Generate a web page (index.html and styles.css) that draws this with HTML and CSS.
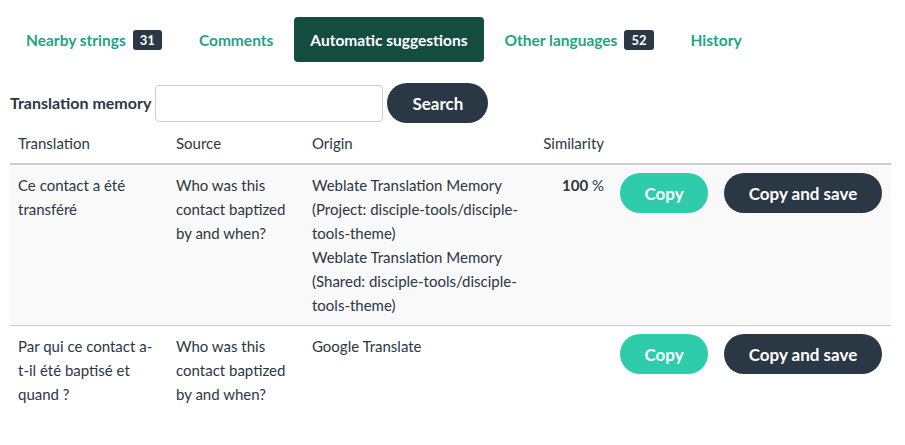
FILE: index.html
```html
<!DOCTYPE html>
<html lang="en">
<head>
  <meta charset="UTF-8">
  <title>Automatic suggestions</title>
  <link rel="stylesheet" href="styles.css">
</head>
<body>
  <ul class="tabs">
    <li><a href="#">Nearby strings <span class="badge">31</span></a></li>
    <li><a href="#">Comments</a></li>
    <li class="active"><a href="#">Automatic suggestions</a></li>
    <li><a href="#">Other languages <span class="badge">52</span></a></li>
    <li><a href="#">History</a></li>
  </ul>

  <form class="memory-form">
    <label for="memoryQuery">Translation memory</label>
    <input type="text" id="memoryQuery">
    <button type="button" class="btn btn-dark btn-search">Search</button>
  </form>

  <table class="suggestions">
    <colgroup>
      <col class="col-translation">
      <col class="col-source">
      <col class="col-origin">
      <col class="col-similarity">
      <col>
    </colgroup>
    <thead>
      <tr>
        <th>Translation</th>
        <th>Source</th>
        <th>Origin</th>
        <th class="num">Similarity</th>
        <th></th>
      </tr>
    </thead>
    <tbody>
      <tr class="striped">
        <td>Ce contact a été transféré</td>
        <td>Who was this contact baptized by and when?</td>
        <td>Weblate Translation Memory (Project: disciple-tools/disciple-tools-theme)<br>Weblate Translation Memory (Shared: disciple-tools/disciple-tools-theme)</td>
        <td class="num"><strong>100</strong> %</td>
        <td class="actions">
          <button type="button" class="btn btn-primary">Copy</button>
          <button type="button" class="btn btn-dark">Copy and save</button>
        </td>
      </tr>
      <tr>
        <td>Par qui ce contact a-t-il été baptisé et quand ?</td>
        <td>Who was this contact baptized by and when?</td>
        <td>Google Translate</td>
        <td class="num"></td>
        <td class="actions">
          <button type="button" class="btn btn-primary">Copy</button>
          <button type="button" class="btn btn-dark">Copy and save</button>
        </td>
      </tr>
    </tbody>
  </table>
</body>
</html>
```

FILE: styles.css
```css
body {
  margin: 0;
  padding: 17px 14px 0 10px;
  font-family: Lato, "Open Sans", sans-serif;
  font-size: 15px;
  line-height: 24px;
  color: #2a3744;
  background: #fff;
}
/* Tabs */
.tabs {
  list-style: none;
  margin: 0;
  padding: 0;
  display: flex;
  gap: 5px;
}
.tabs li a {
  display: flex;
  align-items: center;
  gap: 7px;
  height: 45px;
  box-sizing: border-box;
  padding: 0 16px;
  border-radius: 4px;
  font-size: 15.5px;
  font-weight: bold;
  color: #1fa385;
  text-decoration: none;
}
.tabs li.active a {
  background: #144d3f;
  color: #fff;
}
.badge {
  display: inline-block;
  background: #2a3744;
  color: #fff;
  font-size: 13px;
  line-height: 20px;
  padding: 0 7px;
  border-radius: 3px;
}
/* Search form */
.memory-form {
  display: flex;
  align-items: center;
  gap: 4px;
  margin-top: 21px;
}
.memory-form label {
  font-size: 16px;
  font-weight: bold;
}
.memory-form input {
  width: 228px;
  height: 37px;
  box-sizing: border-box;
  border: 1px solid #ccc;
  border-radius: 4px;
  margin: 0;
  padding: 6px 10px;
  font: inherit;
}
.btn {
  height: 40px;
  border: none;
  border-radius: 20px;
  padding: 0 24px;
  font-family: inherit;
  font-size: 17px;
  font-weight: bold;
  color: #fff;
  cursor: pointer;
}
.btn-dark {
  background: #2a3744;
}
.btn-primary {
  background: #2eccaa;
}
.btn-search {
  width: 101px;
  padding: 0;
}
/* Table */
.suggestions {
  width: 881px;
  border-collapse: collapse;
  table-layout: fixed;
}
.col-translation { width: 158px; }
.col-source { width: 136px; }
.col-origin { width: 228px; }
.col-similarity { width: 80px; }
.suggestions th,
.suggestions td {
  padding: 8px;
  text-align: left;
  vertical-align: top;
  font-weight: normal;
}
.suggestions thead th {
  border-bottom: 2px solid #ccc;
}
.suggestions tbody tr {
  border-bottom: 1px solid #ccc;
}
.suggestions tbody tr:last-child {
  border-bottom: none;
}
.suggestions tr.striped {
  background: #f9f9f9;
}
.suggestions .num {
  text-align: right;
}
.suggestions .actions {
  display: flex;
  gap: 16px;
}
.actions .btn-primary {
  width: 88px;
  padding: 0;
}
.actions .btn-dark {
  width: 158px;
  padding: 0;
}
```
